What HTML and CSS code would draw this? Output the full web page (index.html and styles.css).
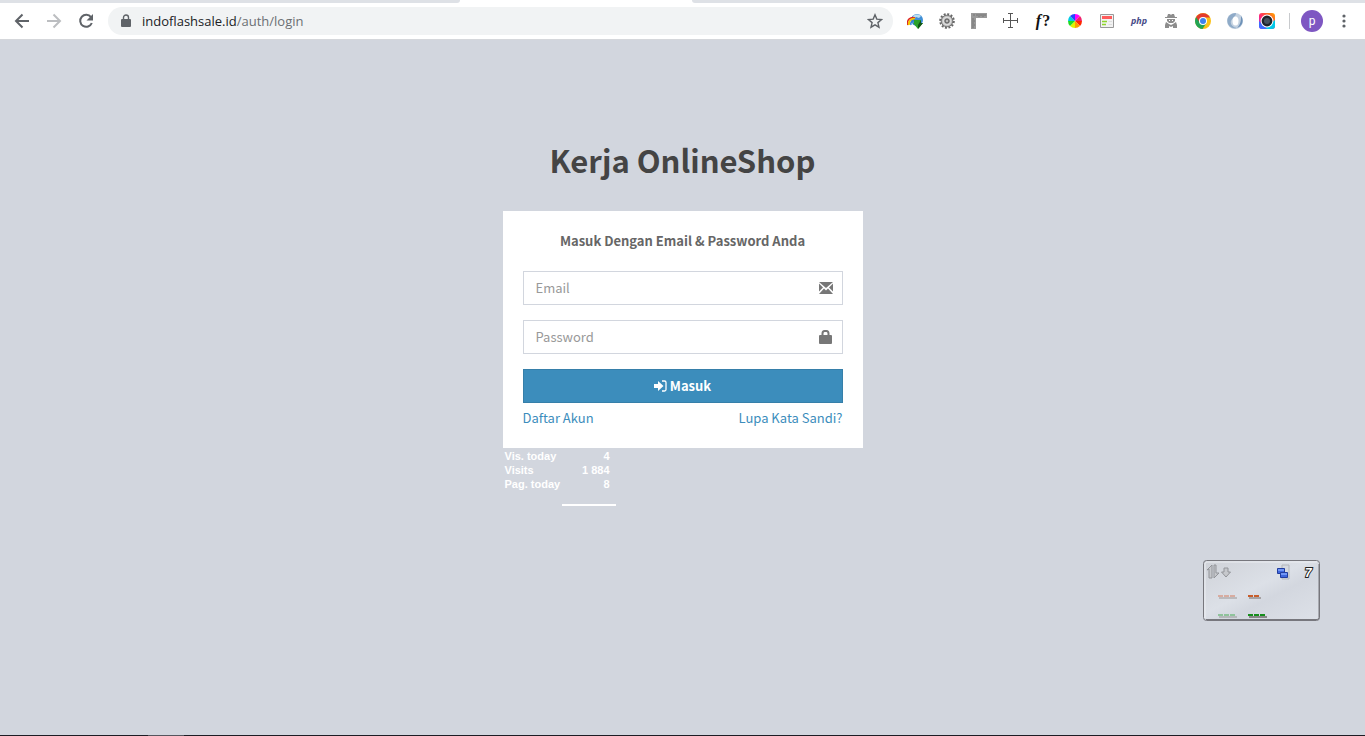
FILE: index.html
```html
<!DOCTYPE html>
<html lang="id">
<head>
<meta charset="utf-8">
<meta name="viewport" content="width=device-width, initial-scale=1">
<title>Kerja OnlineShop</title>
<link rel="stylesheet" href="styles.css">
</head>
<body>
<header class="browser">
  <div class="tabstrip"><span class="tab-left"></span><span class="tab-active"></span><span class="tab-right"></span></div>
  <div class="toolbar">
    <nav class="nav-buttons">
      <button class="icon-btn" aria-label="Back"><svg width="16" height="16" viewBox="0 0 16 16" fill="none" stroke="#5f6368" stroke-width="2"><path d="M15 8H2M8.500 1.500 2 8l6.500 6.500"/></svg></button>
      <button class="icon-btn" aria-label="Forward"><svg width="16" height="16" viewBox="0 0 16 16" fill="none" stroke="#bcbec1" stroke-width="2"><path d="M1 8h13M7.500 1.500 14 8l-6.500 6.500"/></svg></button>
      <button class="icon-btn" aria-label="Reload"><svg width="16" height="16" viewBox="0 0 16 16"><path d="M13 4.200A6 6 0 1 0 13.800 10" fill="none" stroke="#5f6368" stroke-width="2"/><path d="M15 1v6.500H8.500z" fill="#5f6368"/></svg></button>
    </nav>
    <div class="omnibox">
      <svg width="10" height="14" viewBox="0 0 10 14"><path d="M2.500 6V3.500a2.500 2.500 0 0 1 5 0V6" fill="none" stroke="#5f6368" stroke-width="1.400"/><rect y="5" width="10" height="8" rx="1" fill="#5f6368"/></svg>
      <span class="url">indoflashsale.id<span class="url-path">/auth/login</span></span>
      <button class="icon-btn" aria-label="Bookmark"><svg width="16" height="16" viewBox="0 0 16 16" fill="none" stroke="#5f6368" stroke-width="1.400"><path d="m8 1.800 1.800 4.300 4.700.4-3.600 3.100 1.100 4.600L8 11.800l-4 2.400 1.100-4.600L1.500 6.500l4.700-.4z"/></svg></button>
    </div>
    <div class="extensions">
      <svg width="16" height="16" viewBox="0 0 16 16"><circle cx="10" cy="7" r="6" fill="#3f8fd6"/><path d="M6 3c2-2 6-2 8 0l-2 2-3-1-2 2z" fill="#b9def2"/><path d="M1 12C-1 7 4 3 8 5" fill="none" stroke="#d22" stroke-width="1.500"/><path d="M2 12C1 8 5 5 8 6" fill="none" stroke="#f5c400" stroke-width="2"/><path d="M4 12c-1-3 2-5 4-5" fill="none" stroke="#2f7fd0" stroke-width="1.500"/><path d="M7 7h7v3h2l-5 6-5-6h1z" fill="#2aa12a"/><path d="M11 16l5-6h-2V7l-3 5z" fill="#125516"/></svg>
      <svg width="16" height="16" viewBox="0 0 16 16"><circle cx="8" cy="8" r="6.800" fill="none" stroke="#666" stroke-width="2" stroke-dasharray="2 1.560"/><circle cx="8" cy="8" r="5.800" fill="#b2b2b2" stroke="#777"/><circle cx="8" cy="8" r="3.800" fill="none" stroke="#ddd" stroke-width="1.500"/><circle cx="8" cy="8" r="2" fill="#bbb" stroke="#555"/></svg>
      <svg width="16" height="16" viewBox="0 0 16 16"><path d="M0 0h16v5H5v11H0z" fill="#999"/><path d="M3 1v2M6 1v2M8 1v3M10 1v2M12 1v3M14 1v2M1 6h2M1 8h3M1 10h2M1 12h3M1 14h2" stroke="#777"/></svg>
      <svg width="16" height="16" viewBox="0 0 16 16"><path d="M7.500 1v14M1 7.500h14M5 .5h5M5 14.500h5M.5 5v5M14.500 5v5" stroke="#555" fill="none"/></svg>
      <span class="ext-font"><i>f</i>?</span>
      <svg width="16" height="16" viewBox="0 0 16 16"><path d="M8 8V1a7 7 0 0 1 5 2z" fill="#f0f"/><path d="m8 8 5-5a7 7 0 0 1 2 5z" fill="#f0216c"/><path d="M8 8h7a7 7 0 0 1-2 5z" fill="#ff2600"/><path d="m8 8 5 5a7 7 0 0 1-5 2z" fill="#ff9e00"/><path d="M8 8v7a7 7 0 0 1-5-2z" fill="#dff500"/><path d="m8 8-5 5a7 7 0 0 1-2-5z" fill="#20dc20"/><path d="M8 8H1a7 7 0 0 1 2-5z" fill="#00cbe6"/><path d="M8 8 3 3a7 7 0 0 1 5-2z" fill="#2445ff"/></svg>
      <svg width="16" height="16" viewBox="0 0 16 16"><path d="M1.500 1.500h13v13h-13z" fill="#f2f2f2" stroke="#999"/><path d="M3 3h10v3H3z" fill="#ff5b5b"/><path d="M3 8.500h5M3 11.500h4" stroke="#8ed52b" stroke-width="1.500"/><path d="M9.500 8.500H13M9.500 11.500H13" stroke="#ddd"/></svg>
      <span class="ext-php">php</span>
      <svg width="16" height="16" viewBox="0 0 16 16" fill="#8d8d8d"><path d="M5 1h2l1 1 1-1h2l1 3h2v1H2V4h2zM4 6h8v2l-2 2H6L4 8zM3 9l3 2 2 1 2-1 3-2 1 3v3h-4v-2l-2 1-2-1v2H2v-3z"/><path d="M6 7h1v1H6zM9 7h1v1H9z" fill="#fff"/></svg>
      <svg width="16" height="16" viewBox="0 0 16 16"><circle cx="8" cy="8" r="8" fill="#fbc116"/><path d="M8 8 1.100 4A8 8 0 0 0 7.500 16l4-6z" fill="#23a455"/><path d="M1.100 4A8 8 0 0 1 15 4.500H8L5 10z" fill="#e33b2e"/><circle cx="8" cy="8" r="4" fill="#fff"/><circle cx="8" cy="8" r="3" fill="#3d82ee"/></svg>
      <svg width="16" height="16" viewBox="0 0 16 16"><circle cx="8" cy="8" r="8" fill="#c3d1e0"/><path d="M9 0C2 0-1 6 1 11c2 4 6 5 9 4-5-1-7-4-6-7s5-4 5-8z" fill="#8fabc8"/><path d="M10 15c6-2 7-8 4-12 0 4 0 8-4 12z" fill="#6e92b8"/><ellipse cx="8.500" cy="8" rx="3" ry="4.500" fill="#fff"/></svg>
      <svg width="16" height="16" viewBox="0 0 16 16"><defs><linearGradient id="cam" x1="1" y1="0" x2="0" y2="1"><stop stop-color="#ffb000"/><stop offset=".3" stop-color="#ff5a30"/><stop offset=".55" stop-color="#ff2a70"/><stop offset="1" stop-color="#b026ff"/></linearGradient></defs><rect width="16" height="16" rx="3" fill="url(#cam)"/><path d="M16 7v6q0 3-3 3H5z" fill="#00c8e8"/><path d="M0 8v5q0 3 3 3h5z" fill="#3d6cff"/><circle cx="8" cy="8" r="6.400" fill="#fff"/><circle cx="8" cy="8" r="5.400" fill="#20252c"/><circle cx="8" cy="8" r="3" fill="#46515e"/></svg>
    </div>
    <span class="divider"></span>
    <button class="avatar" aria-label="Profile">p</button>
    <button class="icon-btn" aria-label="Menu"><svg width="16" height="16" viewBox="0 0 16 16" fill="#5f6368"><circle cx="8" cy="3" r="1.600"/><circle cx="8" cy="8" r="1.600"/><circle cx="8" cy="13" r="1.600"/></svg></button>
  </div>
</header>
<main class="page">
  <div class="login-box">
    <h1 class="logo">Kerja OnlineShop</h1>
    <form class="card">
      <p class="message">Masuk Dengan Email &amp; Password Anda</p>
      <label class="field">
        <input type="email" placeholder="Email" aria-label="Email">
        <svg width="14" height="12" viewBox="0 0 14 12" fill="#777"><path d="M0 0h14L7 6zM0 1.500 4 5.500 0 9.500zM14 1.500 10 5.500 14 9.500zM0 12l5-5.500L7 8.500l2-2L14 12z"/></svg>
      </label>
      <label class="field">
        <input type="password" placeholder="Password" aria-label="Password">
        <svg width="14" height="14" viewBox="0 0 14 14"><path d="M3.500 6V3.500Q3.500 1 5.500 1h2q2 0 2 2.500V6" fill="none" stroke="#777" stroke-width="2"/><rect y="5" width="13" height="9" rx="1" fill="#777"/></svg>
      </label>
      <button class="submit" type="submit"><svg width="13" height="12" viewBox="0 0 13 12" fill="#fff"><path d="M0 4h4V1l5.500 5L4 11V8H0z"/><path d="M8 1h2.500q1.500 0 1.500 1.500v7q0 1.500-1.500 1.500H8" fill="none" stroke="#fff" stroke-width="1.300"/></svg>Masuk</button>
      <div class="links"><a href="#">Daftar Akun</a><a href="#">Lupa Kata Sandi?</a></div>
    </form>
    <table class="counter">
      <tr><th scope="row">Vis. today</th><td>4</td></tr>
      <tr><th scope="row">Visits</th><td>1 884</td></tr>
      <tr><th scope="row">Pag. today</th><td>8</td></tr>
    </table>
    <div class="counter-line"></div>
  </div>
</main>
<aside class="widget">
  <svg viewBox="0 0 117 61" width="117" height="61">
    <defs><linearGradient id="glass" x1="0" y1="0" x2="1" y2="1"><stop stop-color="#cfd2d8"/><stop offset=".45" stop-color="#dce0e7"/><stop offset=".6" stop-color="#d3d7df"/><stop offset="1" stop-color="#dde1e8"/></linearGradient></defs>
    <rect x=".5" y=".5" width="116" height="60" rx="3" fill="url(#glass)" stroke="#77777d"/>
    <path d="M2 58V4q0-2 2-2h110" fill="none" stroke="#eceef2"/>
    <path d="M3 59.500h111q2 0 2-2V4" fill="none" stroke="#77777d"/>
    <g fill="#c6c8cc" stroke="#929499"><path d="m4 10 5-5v13H6V9zM11 5h2v8h3l-5 5z"/><path d="M21 8h4v4h2.500L23 17l-4.500-5H21z"/></g>
    <path d="M79 5h7v14h-7z" fill="#d7dae0" stroke="#b2b5ba"/>
    <path d="M74.500 8.500h7v5h-7zM77.500 12.500h7v5h-7z" fill="#3e66dd" stroke="#213d9e"/>
    <path d="M75 9h6v2h-6zM78 13h6v2h-6z" fill="#7095f5"/>
    <text x="102" y="17" class="widget-count">7</text>
    <g fill="none" stroke-width="2"><path d="M16 38h18" stroke="#bbbabd"/><path d="M46 38h12" stroke="#a5a2a4"/><path d="M15 36h18" stroke="#d8aca0" stroke-dasharray="5 1"/><path d="M45 36h12" stroke="#c85d2b" stroke-dasharray="5 1"/><path d="M16 57h18" stroke="#b5b8bb"/><path d="M46 57h18" stroke="#888"/><path d="M15 55h18" stroke="#8fc39b" stroke-dasharray="5 1"/><path d="M45 55h18" stroke="#168e1c" stroke-dasharray="5 1"/></g>
  </svg>
</aside>
<footer class="taskbar"><span></span></footer>
</body>
</html>
```
FILE: styles.css
```css
* { box-sizing: border-box; }
body {
  margin: 0;
  min-height: 100vh;
  display: flex;
  flex-direction: column;
  background: #d2d6de;
  color: #666;
  font: 500 13px/20px "Noto Sans CJK JP", sans-serif;
}
button { border: 0; padding: 0; background: none; font: inherit; cursor: pointer; }
svg { display: block; flex: none; }

.browser { background: #fff; border-bottom: 1px solid #d5d7db; }
.tabstrip { display: flex; height: 3px; }
.tab-left { width: 460px; background: #dee1e6; border-bottom-right-radius: 6px; }
.tab-active { width: 232px; }
.tab-right { flex: 1; background: #dee1e6; border-bottom-left-radius: 6px; }
.toolbar { display: flex; align-items: center; height: 36px; padding: 0 13px 0 14px; }
.nav-buttons { display: flex; gap: 16px; margin-right: 14px; }
.omnibox {
  flex: 1;
  display: flex;
  align-items: center;
  height: 28px;
  padding: 0 10px 0 13px;
  border-radius: 14px;
  background: #f1f3f4;
}
.url {
  flex: 1;
  margin-left: 11px;
  color: #202124;
  font: 400 13px/20px "Open Sans", sans-serif;
}
.url-path { color: #6b6f73; }
.extensions { display: flex; align-items: center; gap: 16px; margin-left: 14px; }
.ext-font {
  display: flex;
  justify-content: center;
  gap: 1px;
  width: 16px;
  color: #111;
  font: 700 16px/16px "Liberation Serif", serif;
}
.ext-php { width: 16px; display: flex; justify-content: center; color: #484c89; font: italic 700 9px/16px "Open Sans", sans-serif; }
.divider { width: 1px; height: 16px; margin: 0 11px 0 14px; background: #c8cacd; }
.avatar {
  width: 22px;
  height: 22px;
  margin-right: 13px;
  border-radius: 50%;
  background: #7e57c2;
  color: #fff;
  font: 400 12px/20px Roboto, sans-serif;
}

.page { flex: 1; }
.login-box { width: 360px; max-width: 100%; margin: 7vw auto 0; }
.logo {
  margin: 0 0 27px;
  color: #444;
  font-size: 31px;
  font-weight: 700;
  line-height: 48px;
  text-align: center;
}
.card { padding: 20px; background: #fff; }
.message { margin: 0 0 20px; font-weight: 700; text-align: center; }
.field { position: relative; display: block; margin-bottom: 15px; }
.field input {
  display: block;
  width: 100%;
  height: 34px;
  padding: 6px 42px 6px 12px;
  border: 1px solid #d2d6de;
  border-radius: 0;
  background: #fff;
  color: #555;
  font: inherit;
  font-weight: 400;
}
.field input::placeholder { color: #999; opacity: 1; }
.field svg { position: absolute; right: 10px; top: 0; bottom: 0; margin: auto 0; }
.submit {
  display: flex;
  align-items: center;
  justify-content: center;
  gap: 3px;
  width: 100%;
  height: 34px;
  border: 1px solid #367fa9;
  background: #3c8dbc;
  color: #fff;
  font-weight: 700;
}
.links { display: flex; justify-content: space-between; margin-top: 5px; font-weight: 400; }
.links a { color: #3c8dbc; text-decoration: none; }

.counter {
  width: 109px;
  border-collapse: collapse;
  color: #fff;
  font: 700 11px/14px "Liberation Sans", Arial, sans-serif;
  margin-top: 1px;
}
.counter th { padding: 0 0 0 2px; text-align: left; white-space: nowrap; }
.counter td { padding: 0 2px 0 0; text-align: right; }
.counter-line { width: 54px; height: 2px; margin: 13px 0 0 59px; background: #fff; }

.widget { position: absolute; right: 45px; bottom: 115px; }
.widget-count { fill: #fff; stroke: #222; stroke-width: 2px; paint-order: stroke; font: italic 700 12px "Liberation Sans", sans-serif; }
.taskbar { height: 1px; background: #1d1c24; }
.taskbar span { display: block; width: 36px; height: 1px; margin-left: 148px; background: #55555d; }
```
